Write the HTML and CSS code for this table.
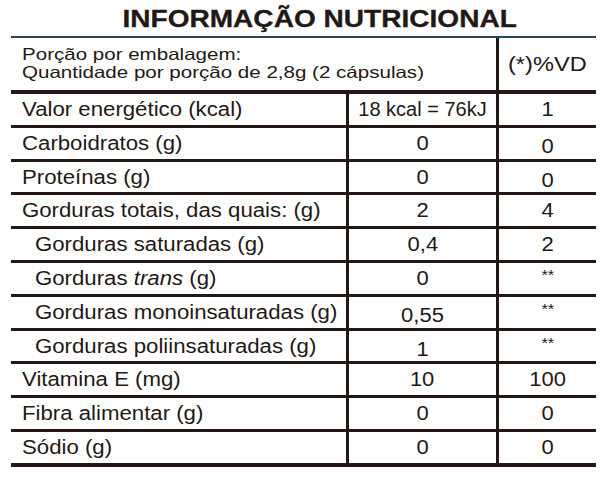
FILE: index.html
```html
<!DOCTYPE html>
<html lang="pt-BR">
<head>
<meta charset="utf-8">
<title>Informação Nutricional</title>
<link rel="stylesheet" href="styles.css">
</head>
<body>
<div class="label">
  <h1 class="title"><span class="title-text">INFORMAÇÃO NUTRICIONAL</span></h1>
  <div class="table">
    <div class="head">
      <div class="portion">
        <div class="portion-line"><span class="sx">Porção por embalagem:</span></div>
        <div class="portion-line"><span class="sx">Quantidade por porção de 2,8g (2 cápsulas)</span></div>
      </div>
      <div class="vd"><span class="sx">(*)%VD</span></div>
    </div>
    <div class="row">
      <div class="name"><span class="sx">Valor energético (kcal)</span></div>
      <div class="qty"><span class="fit">18 kcal = 76kJ</span></div>
      <div class="pct"><span class="sx">1</span></div>
    </div>
    <div class="row">
      <div class="name"><span class="sx">Carboidratos (g)</span></div>
      <div class="qty"><span class="sx">0</span></div>
      <div class="pct low"><span class="sx">0</span></div>
    </div>
    <div class="row">
      <div class="name"><span class="sx">Proteínas (g)</span></div>
      <div class="qty"><span class="sx">0</span></div>
      <div class="pct low"><span class="sx">0</span></div>
    </div>
    <div class="row">
      <div class="name"><span class="sx">Gorduras totais, das quais: (g)</span></div>
      <div class="qty"><span class="sx">2</span></div>
      <div class="pct"><span class="sx">4</span></div>
    </div>
    <div class="row">
      <div class="name sub"><span class="sx">Gorduras saturadas (g)</span></div>
      <div class="qty"><span class="sx">0,4</span></div>
      <div class="pct"><span class="sx">2</span></div>
    </div>
    <div class="row">
      <div class="name sub"><span class="sx">Gorduras <em>trans</em> (g)</span></div>
      <div class="qty"><span class="sx">0</span></div>
      <div class="pct stars"><span class="sx">**</span></div>
    </div>
    <div class="row">
      <div class="name sub"><span class="sx">Gorduras monoinsaturadas (g)</span></div>
      <div class="qty low"><span class="sx">0,55</span></div>
      <div class="pct stars"><span class="sx">**</span></div>
    </div>
    <div class="row">
      <div class="name sub"><span class="sx">Gorduras poliinsaturadas (g)</span></div>
      <div class="qty low"><span class="sx">1</span></div>
      <div class="pct stars"><span class="sx">**</span></div>
    </div>
    <div class="row">
      <div class="name"><span class="sx">Vitamina E (mg)</span></div>
      <div class="qty"><span class="sx">10</span></div>
      <div class="pct"><span class="sx">100</span></div>
    </div>
    <div class="row">
      <div class="name"><span class="sx">Fibra alimentar (g)</span></div>
      <div class="qty"><span class="sx">0</span></div>
      <div class="pct"><span class="sx">0</span></div>
    </div>
    <div class="row last">
      <div class="name"><span class="sx">Sódio (g)</span></div>
      <div class="qty"><span class="sx">0</span></div>
      <div class="pct"><span class="sx">0</span></div>
    </div>
  </div>
</div>
</body>
</html>
```

FILE: styles.css
```css
* {
  box-sizing: border-box;
}

html,
body {
  margin: 0;
  padding: 0;
  background: #ffffff;
}

body {
  font-family: "Liberation Sans", Arial, Helvetica, sans-serif;
  color: #231815;
}

.label {
  width: 606px;
  height: 479px;
}

.title {
  margin: 0;
  height: 36px;
  padding: 7px 0 0 34px;
  font-size: 23px;
  line-height: 25px;
  font-weight: bold;
  text-align: center;
  white-space: nowrap;
}

.title-text {
  display: inline-block;
  transform: scaleX(1.22);
  transform-origin: center;
  -webkit-text-stroke: 0.3px #231815;
}

.table {
  margin-left: 11px;
  width: 585px;
  border-top: 2px solid #24465e;
}

.sx {
  display: inline-block;
  transform: scaleX(1.1);
}

.fit {
  display: inline-block;
}

.head {
  display: grid;
  grid-template-columns: 488px 97px;
  height: 56px;
  border-bottom: 4px solid #231815;
}

.portion {
  border-right: 3px solid #231815;
  padding: 6.5px 0 0 11px;
  font-size: 16.5px;
  line-height: 18.5px;
}

.portion .sx {
  transform: scaleX(1.245);
  transform-origin: left;
  white-space: nowrap;
}

.vd {
  padding-top: 14px;
  font-size: 20px;
  line-height: 24px;
  text-align: center;
}

.vd .sx {
  transform: scaleX(1.18);
}

.row {
  display: grid;
  grid-template-columns: 338px 150px 97px;
  height: 33.8px;
  border-bottom: 3px solid #231815;
  font-size: 20px;
  line-height: 30px;
}

.row:first-of-type {
  height: 33px;
}

.row.last {
  height: 35px;
  border-bottom-width: 4px;
}

.name {
  border-right: 3px solid #231815;
  padding-left: 11px;
  white-space: nowrap;
}

.name .sx {
  transform-origin: left;
  transform: scaleX(1.11);
}

.name.sub {
  padding-left: 24px;
}

.name em {
  font-style: italic;
}

.qty {
  border-right: 3px solid #231815;
  text-align: center;
}

.pct {
  text-align: center;
}

.low {
  padding-top: 3px;
}

.stars {
  font-size: 15px;
  line-height: 24px;
}
```
